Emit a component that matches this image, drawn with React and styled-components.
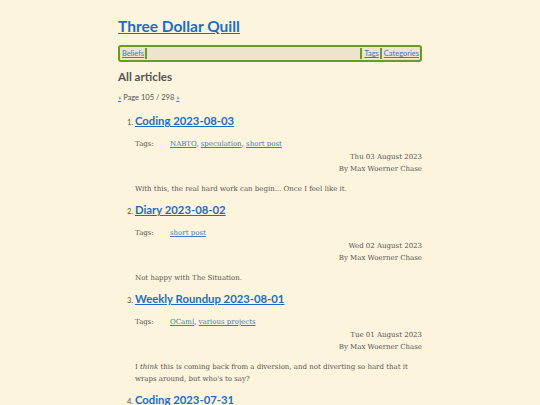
import React from 'react';
import styled, { createGlobalStyle } from 'styled-components';

const GlobalStyle = createGlobalStyle`
  html, body {
    margin: 0;
    padding: 0;
    background: #fcf4dc;
  }
  body {
    font-family: "DejaVu Serif", serif;
    color: #555555;
  }
`

const Page = styled.div`
  width: 304px;
  margin: 0 auto;
  padding-top: 15px;
`

const SiteTitle = styled.h1`
  margin: 0 0 8px 0;
  font-family: "Lato", sans-serif;
  font-size: 15.5px;
  line-height: 22px;
  font-weight: 700;
  a {
    color: #1a6fc4;
  }
`

const Nav = styled.nav`
  display: flex;
  align-items: center;
  height: 11px;
  background: #ebe4cf;
  border: 2px solid #6a9a2a;
  border-radius: 3px;
  padding: 1px 0;
  font-family: "Lato", sans-serif;
  font-size: 7.5px;
`

const NavLink = styled.a`
  color: #3a7cc0;
  padding: 0 1px 0 2px;
  line-height: 11px;
  border-left: ${p => p.$left ? '2px solid #6a9a2a' : 'none'};
  border-right: ${p => p.$right ? '2px solid #6a9a2a' : 'none'};
`

const Spacer = styled.div`
  flex: 1;
`

const Heading = styled.h2`
  margin: 7px 0 8px 0;
  font-family: "Lato", sans-serif;
  font-size: 11.6px;
  line-height: 16px;
  font-weight: 700;
  color: #555;
`

const Pager = styled.p`
  margin: 0 0 10px 0;
  font-family: "Lato", sans-serif;
  font-size: 7.5px;
  line-height: 10px;
  a {
    color: #3a7cc0;
  }
`

const List = styled.ol`
  margin: 0;
  padding-left: 17px;
  font-family: "Lato", sans-serif;
  li::marker {
    font-size: 7.5px;
    color: #555;
  }
`

const Item = styled.li`
  margin-bottom: 7px;
`

const ItemTitle = styled.h3`
  margin: 0 0 9px 0;
  font-size: 11.3px;
  line-height: 16px;
  font-weight: 700;
  a {
    color: #1a6fc4;
  }
`

const TagRow = styled.div`
  display: flex;
  margin-bottom: 1px;
  font-family: "DejaVu Serif", serif;
  font-size: 7px;
  line-height: 12px;
`

const TagLabel = styled.span`
  width: 35px;
`

const TagLink = styled.a`
  color: #3a7cc0;
`

const Meta = styled.div`
  text-align: right;
  font-family: "DejaVu Serif", serif;
  font-size: 7px;
  line-height: 12px;
`

const Excerpt = styled.p`
  margin: 8px 0 0 0;
  font-family: "DejaVu Serif", serif;
  font-size: 7px;
  line-height: 12px;
`

const articles = [
  {
    title: 'Coding 2023-08-03',
    tags: ['NABTO', 'speculation', 'short post'],
    date: 'Thu 03 August 2023',
    excerpt: <>With this, the real hard work can begin... Once I feel like it.</>
  },
  {
    title: 'Diary 2023-08-02',
    tags: ['short post'],
    date: 'Wed 02 August 2023',
    excerpt: <>Not happy with The Situation.</>
  },
  {
    title: 'Weekly Roundup 2023-08-01',
    tags: ['OCaml', 'various projects'],
    date: 'Tue 01 August 2023',
    excerpt: <>I <em>think</em> this is coming back from a diversion, and not diverting so hard that it wraps around, but who's to say?</>
  },
  {
    title: 'Coding 2023-07-31',
    tags: ['short post'],
    date: 'Mon 31 July 2023',
    excerpt: <>More stuff.</>
  }
]

export default function App() {
  return (
    <Page>
      <GlobalStyle />
      <SiteTitle><a href="#">Three Dollar Quill</a></SiteTitle>
      <Nav>
        <NavLink href="#" $right>Beliefs</NavLink>
        <Spacer />
        <NavLink href="#" $left>Tags</NavLink>
        <NavLink href="#" $left>Categories</NavLink>
      </Nav>
      <Heading>All articles</Heading>
      <Pager><a href="#">«</a> Page 105 / 298 <a href="#">»</a></Pager>
      <List start={1}>
        {articles.map(a => (
          <Item key={a.title}>
            <ItemTitle><a href="#">{a.title}</a></ItemTitle>
            <TagRow>
              <TagLabel>Tags:</TagLabel>
              <span>
                {a.tags.map((t, i) => (
                  <React.Fragment key={t}>
                    {i > 0 && ', '}
                    <TagLink href="#">{t}</TagLink>
                  </React.Fragment>
                ))}
              </span>
            </TagRow>
            <Meta>{a.date}</Meta>
            <Meta>By Max Woerner Chase</Meta>
            <Excerpt>{a.excerpt}</Excerpt>
          </Item>
        ))}
      </List>
    </Page>
  );
}
